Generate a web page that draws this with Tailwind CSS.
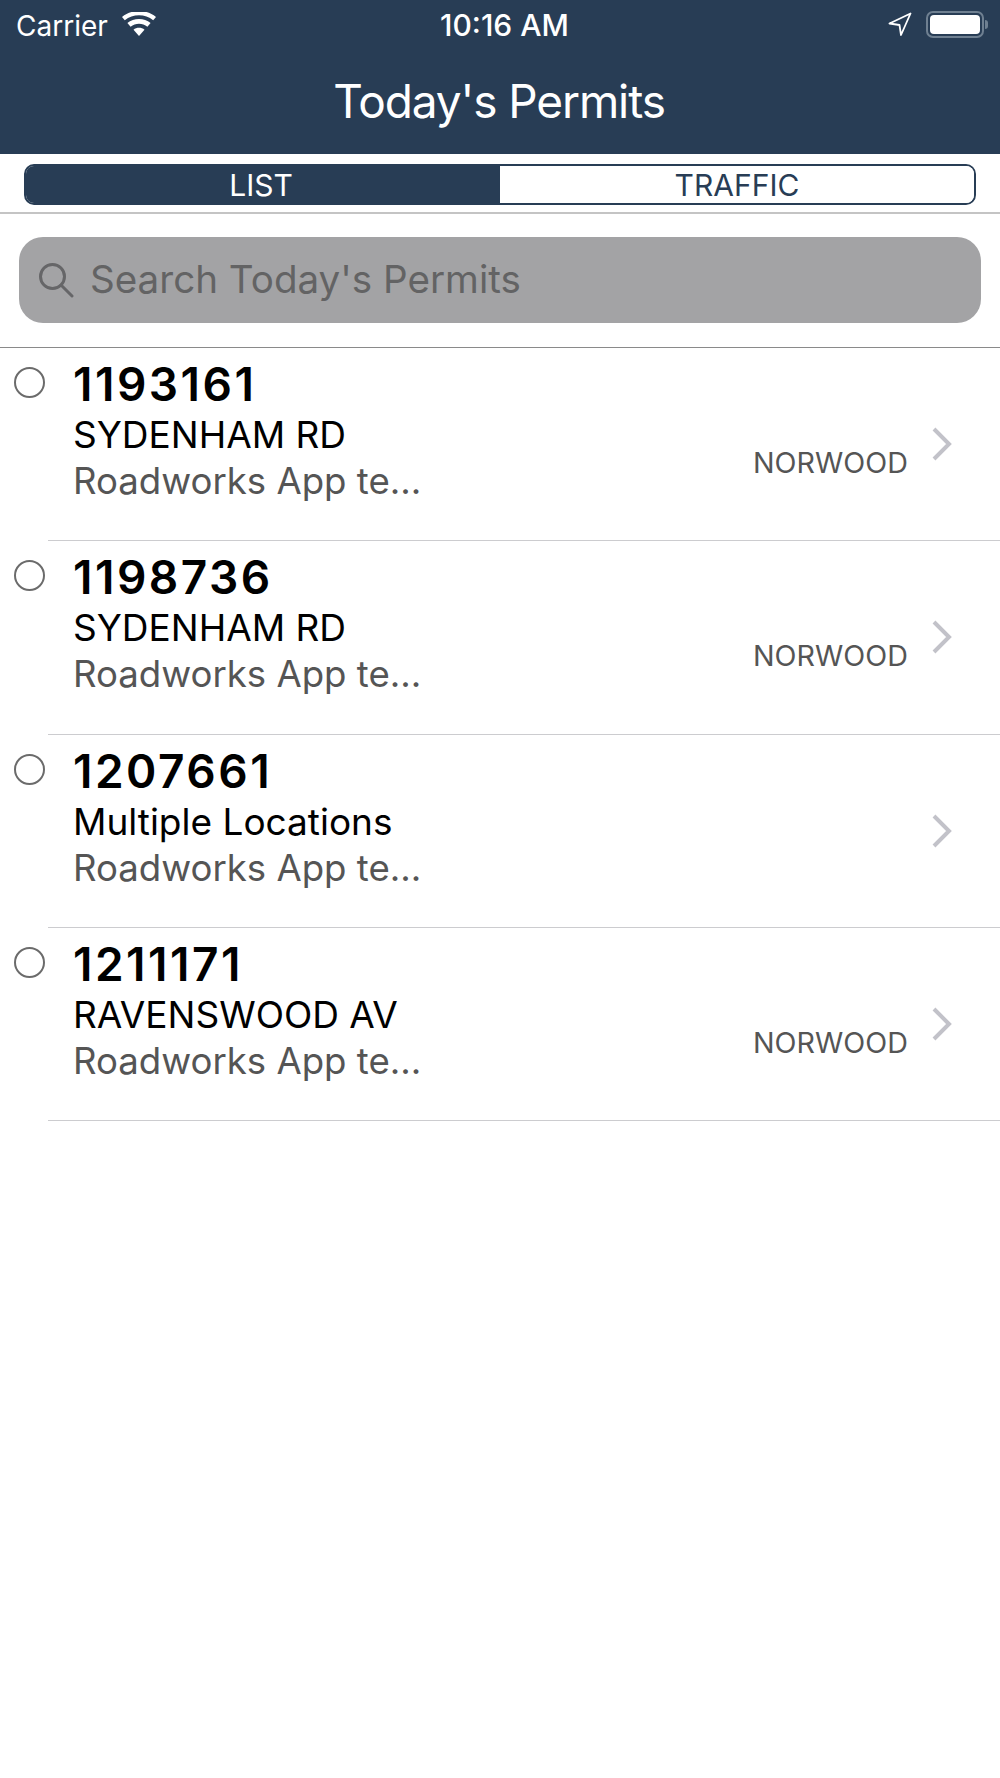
<!DOCTYPE html>
<html lang="en">
<head>
    <meta charset="UTF-8" />
    <meta name="viewport" content="width=device-width, initial-scale=1" />
    <title>Today's Permits</title>
    <script src="https://cdn.jsdelivr.net/npm/@tailwindcss/browser@4"></script>
</head>
<body class="bg-white font-['Inter',sans-serif] w-[1000px] h-[1778px] overflow-hidden">
    <!-- header -->
    <header class="bg-[#283d55] h-[154px] text-white">
        <div class="h-[48px] pl-4 pr-3 flex items-center justify-between relative">
            <div class="flex items-center gap-[14px]">
                <span class="text-[28px] leading-none pt-[3px]">Carrier</span>
                <svg width="34" height="24" viewBox="0 0 34 24" fill="white">
                    <path d="M17 24l-5.500-6.200c3-2.600 8-2.600 11 0z" />
                    <path d="M8.600 14.700l-3.200-3.600c6.400-5.600 16.800-5.600 23.200 0l-3.200 3.600c-4.800-4-12-4-16.800 0z" />
                    <path d="M2.800 8.200L0 5c9.500-8 24.500-8 34 0l-2.800 3.200c-8-6.600-20.400-6.600-28.400 0z" />
                </svg>
            </div>
            <span class="absolute left-[440px] top-[11px] text-[30px] leading-[28px] font-medium">10:16 AM</span>
            <div class="flex items-center gap-[14px]">
                <svg width="24" height="24" viewBox="0 0 24 24" fill="none" stroke="white" stroke-width="1.800" stroke-linejoin="round">
                    <path d="M22.500 1.500L1.500 11.500l10 1.500 1.500 10z" />
                </svg>
                <div class="flex items-center gap-[1px]">
                    <div class="w-[58px] h-[27px] rounded-[7px] border-2 border-[#6f8091] p-[2px]">
                        <div class="w-full h-full bg-white rounded-[4px]"></div>
                    </div>
                    <div class="w-[3px] h-[9px] bg-[#6f8091] rounded-r-full"></div>
                </div>
            </div>
        </div>
        <h1 class="text-[46px] leading-[52px] text-center mt-[27px] pr-[2px] tracking-[-1.100px]">Today's Permits</h1>
    </header>

    <!-- list / traffic toggle -->
    <div class="h-[60px] pt-[10px] px-[24px] border-b-2 border-[#c4c4c4]">
        <div class="flex h-[41px] w-[952px] rounded-[10px] border-2 border-[#283d55] overflow-hidden text-[30px]">
            <div class="w-[474px] bg-[#283d55] text-white flex items-center justify-center pr-[4px] pt-[1px]">LIST</div>
            <div class="flex-1 bg-white text-[#283d55] flex items-center justify-center pt-[1px]">TRAFFIC</div>
        </div>
    </div>

    <!-- search -->
    <div class="h-[134px] pt-[23px] px-[19px] border-b border-[#8a8a8a]">
        <div class="h-[86px] w-[962px] rounded-[24px] bg-[#a3a3a5] flex items-center pl-[19px] gap-[16px]">
            <svg width="36" height="36" viewBox="0 0 36 36" fill="none" stroke="#666668" stroke-width="3">
                <circle cx="14.500" cy="14.500" r="12" />
                <path d="M23 23l11 11" stroke-linecap="round" />
            </svg>
            <span class="text-[38.600px] leading-none text-[#636364] mb-[2px]">Search Today's Permits</span>
        </div>
    </div>

    <!-- permits -->
    <ul>
        <li class="h-[193.250px] relative flex">
            <div class="w-[31px] h-[31px] ml-[14px] mt-[19px] rounded-full border-2 border-[#6b6b6b] shrink-0"></div>
            <div class="ml-[28px] pt-[11px]">
                <div class="text-[46px] leading-[50px] font-semibold tracking-[2.500px] text-black">1193161</div>
                <div class="text-[37px] leading-[42px] mt-[5px] text-black">SYDENHAM RD</div>
                <div class="text-[36.600px] leading-[46px] mt-[2px] text-[#555555]">Roadworks App te...</div>
            </div>
            <span class="absolute left-[753px] top-[99px] text-[28.700px] leading-[32px] text-[#555555]">NORWOOD</span>
            <svg class="absolute left-[932px] top-[79px]" width="20" height="34" viewBox="0 0 20 34" fill="none" stroke="#c2c2c9" stroke-width="4"><path d="M2 2l15 15L2 32" /></svg>
            <div class="absolute left-[48px] right-0 bottom-0 h-px bg-[#cccccf]"></div>
        </li>
        <li class="h-[193.250px] relative flex">
            <div class="w-[31px] h-[31px] ml-[14px] mt-[19px] rounded-full border-2 border-[#6b6b6b] shrink-0"></div>
            <div class="ml-[28px] pt-[11px]">
                <div class="text-[46px] leading-[50px] font-semibold tracking-[2.500px] text-black">1198736</div>
                <div class="text-[37px] leading-[42px] mt-[5px] text-black">SYDENHAM RD</div>
                <div class="text-[36.600px] leading-[46px] mt-[2px] text-[#555555]">Roadworks App te...</div>
            </div>
            <span class="absolute left-[753px] top-[99px] text-[28.700px] leading-[32px] text-[#555555]">NORWOOD</span>
            <svg class="absolute left-[932px] top-[79px]" width="20" height="34" viewBox="0 0 20 34" fill="none" stroke="#c2c2c9" stroke-width="4"><path d="M2 2l15 15L2 32" /></svg>
            <div class="absolute left-[48px] right-0 bottom-0 h-px bg-[#cccccf]"></div>
        </li>
        <li class="h-[193.250px] relative flex">
            <div class="w-[31px] h-[31px] ml-[14px] mt-[19px] rounded-full border-2 border-[#6b6b6b] shrink-0"></div>
            <div class="ml-[28px] pt-[11px]">
                <div class="text-[46px] leading-[50px] font-semibold tracking-[2.500px] text-black">1207661</div>
                <div class="text-[37px] leading-[42px] mt-[5px] text-black">Multiple Locations</div>
                <div class="text-[36.600px] leading-[46px] mt-[2px] text-[#555555]">Roadworks App te...</div>
            </div>
            <svg class="absolute left-[932px] top-[79px]" width="20" height="34" viewBox="0 0 20 34" fill="none" stroke="#c2c2c9" stroke-width="4"><path d="M2 2l15 15L2 32" /></svg>
            <div class="absolute left-[48px] right-0 bottom-0 h-px bg-[#cccccf]"></div>
        </li>
        <li class="h-[193.250px] relative flex">
            <div class="w-[31px] h-[31px] ml-[14px] mt-[19px] rounded-full border-2 border-[#6b6b6b] shrink-0"></div>
            <div class="ml-[28px] pt-[11px]">
                <div class="text-[46px] leading-[50px] font-semibold tracking-[2.500px] text-black">1211171</div>
                <div class="text-[37px] leading-[42px] mt-[5px] text-black">RAVENSWOOD AV</div>
                <div class="text-[36.600px] leading-[46px] mt-[2px] text-[#555555]">Roadworks App te...</div>
            </div>
            <span class="absolute left-[753px] top-[99px] text-[28.700px] leading-[32px] text-[#555555]">NORWOOD</span>
            <svg class="absolute left-[932px] top-[79px]" width="20" height="34" viewBox="0 0 20 34" fill="none" stroke="#c2c2c9" stroke-width="4"><path d="M2 2l15 15L2 32" /></svg>
            <div class="absolute left-[48px] right-0 bottom-0 h-px bg-[#cccccf]"></div>
        </li>
    </ul>
</body>
</html>
